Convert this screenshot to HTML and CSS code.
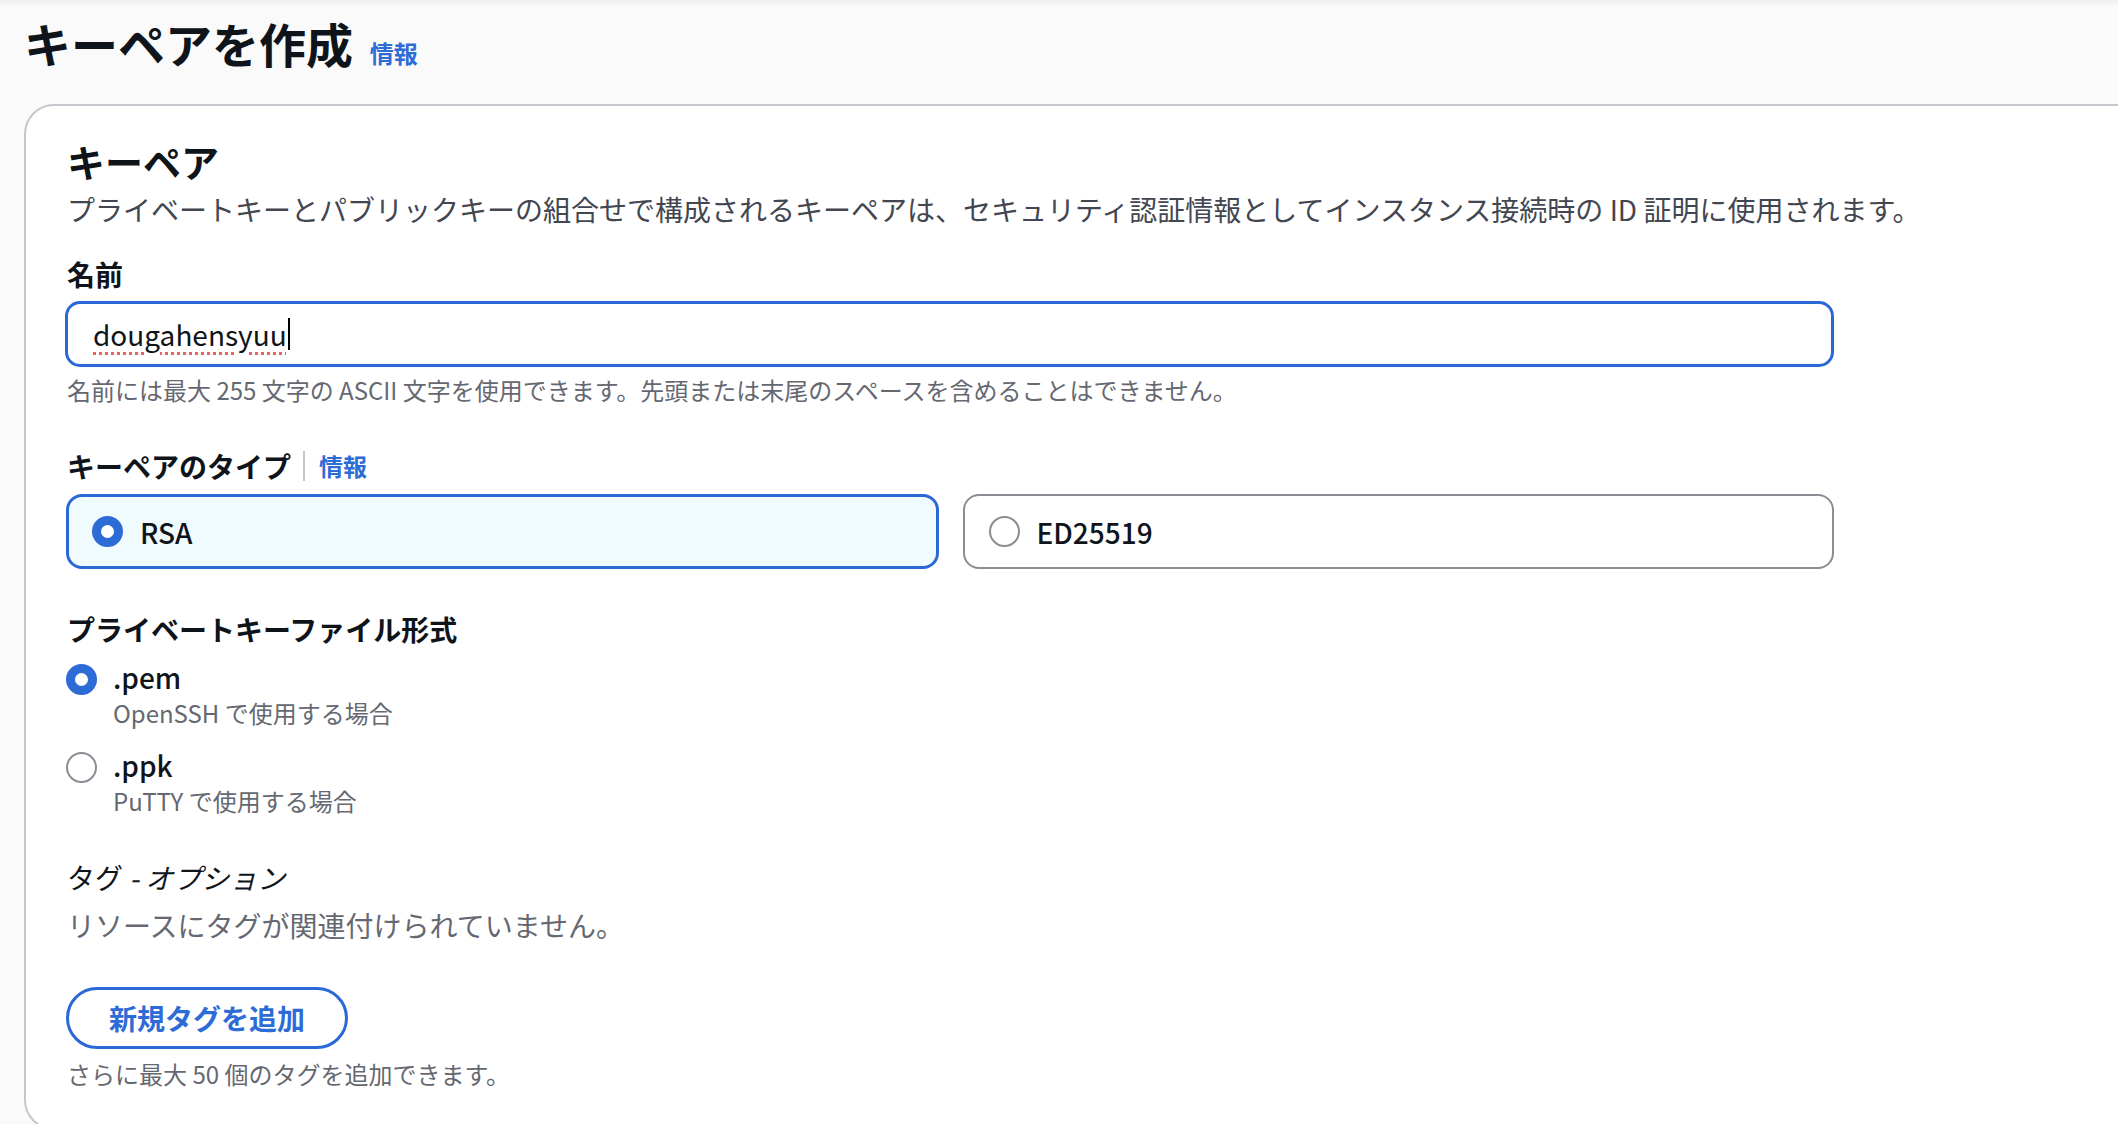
FILE: index.html
```html
<!DOCTYPE html>
<html lang="ja">

<head>
    <meta charset="UTF-8">
    <meta name="viewport" content="width=device-width, initial-scale=1.0">
    <title>キーペアを作成</title>
    <link rel="stylesheet" href="styles.css">
</head>

<body>
    <div class="page">
        <h1 class="page-title">キーペアを作成 <a class="info-link" href="#">情報</a></h1>

        <div class="card">
            <div class="card-header">
                <h2>キーペア</h2>
                <p class="desc">プライベートキーとパブリックキーの組合せで構成されるキーペアは、セキュリティ認証情報としてインスタンス接続時の ID 証明に使用されます。</p>
            </div>

            <!-- 名前 -->
            <div class="field field-name">
                <div class="label">名前</div>
                <div class="input focused">
                    <span class="typed">dougahensyuu</span><span class="caret"></span>
                </div>
                <div class="hint">名前には最大 255 文字の ASCII 文字を使用できます。先頭または末尾のスペースを含めることはできません。</div>
            </div>

            <!-- キーペアのタイプ -->
            <div class="field field-type">
                <div class="label">キーペアのタイプ <span class="sep"></span><a class="info-link small" href="#">情報</a></div>
                <div class="tiles">
                    <div class="tile selected">
                        <span class="radio checked"></span>
                        <span class="tile-text">RSA</span>
                    </div>
                    <div class="tile">
                        <span class="radio"></span>
                        <span class="tile-text">ED25519</span>
                    </div>
                </div>
            </div>

            <!-- ファイル形式 -->
            <div class="field field-format">
                <div class="label">プライベートキーファイル形式</div>
                <div class="option">
                    <span class="radio checked"></span>
                    <div>
                        <div class="option-label">.pem</div>
                        <div class="option-sub">OpenSSH で使用する場合</div>
                    </div>
                </div>
                <div class="option second">
                    <span class="radio"></span>
                    <div>
                        <div class="option-label">.ppk</div>
                        <div class="option-sub">PuTTY で使用する場合</div>
                    </div>
                </div>
            </div>

            <!-- タグ -->
            <div class="field field-tags">
                <div class="tags-title">タグ <i>- オプション</i></div>
                <div class="empty">リソースにタグが関連付けられていません。</div>
                <button class="btn-add">新規タグを追加</button>
                <div class="hint">さらに最大 50 個のタグを追加できます。</div>
            </div>
        </div>
    </div>
</body>

</html>
```

FILE: styles.css
```css
html,
body {
    margin: 0;
    padding: 0;
    height: 100%;
    overflow: hidden;
}

body {
    background: linear-gradient(#efefef, #fafafa 6px);
    font-family: "Noto Sans CJK JP", "Noto Sans", sans-serif;
    font-size: 28px;
    color: #0f141a;
}

.page {
    padding: 15px 0 0 24px;
}

.page-title {
    margin: 0;
    font-size: 47px;
    line-height: 56px;
    font-weight: 700;
}

.info-link {
    color: #2d6bd6;
    font-size: 24px;
    line-height: 1;
    font-weight: 700;
    text-decoration: none;
    margin-left: 6px;
}

.info-link.small {
    margin-left: 0;
}

/* Card */
.card {
    margin-top: 33px;
    margin-right: -60px;
    background: #fff;
    border: 2px solid #c6c6cd;
    border-radius: 30px;
    padding: 32px 0 38px 41px;
}

.card-header h2 {
    margin: 0;
    font-size: 38px;
    line-height: 46px;
    font-weight: 700;
}

.desc {
    margin: 7px 0 0;
    line-height: 36px;
    color: #424650;
}

.label {
    font-weight: 700;
    line-height: 36px;
    display: flex;
    align-items: center;
}

.hint {
    font-size: 24px;
    line-height: 32px;
    color: #656871;
}

.field-name {
    margin-top: 29px;
}

.input {
    box-sizing: border-box;
    width: 1769px;
    height: 66px;
    margin: 9px 0 7px -2px;
    border: 3px solid #2a68d6;
    border-radius: 15px;
    padding-left: 25px;
    display: flex;
    align-items: center;
    color: #0f141a;
}

.typed {
    text-decoration: underline dotted #e8645a;
    text-decoration-thickness: 3px;
    text-underline-offset: 6px;
}

.caret {
    display: inline-block;
    width: 2px;
    height: 32px;
    background: #000;
    margin-left: 1px;
}

.field-type {
    margin-top: 42px;
}

.sep {
    display: inline-block;
    width: 2px;
    height: 30px;
    background: #c6c6cd;
    margin: 0 14px 0 12px;
}

.tiles {
    display: flex;
    gap: 24px;
    margin: 10px 0 0 -1px;
    width: 1768px;
}

.tile {
    flex: 1;
    box-sizing: border-box;
    height: 75px;
    border: 2px solid #8c8c94;
    border-radius: 16px;
    padding-left: 24px;
    display: flex;
    align-items: center;
    gap: 17px;
    background: #fff;
}

.tile.selected {
    border: 3px solid #2a68d6;
    background: #f0fbff;
    padding-left: 23px;
}

.tile-text {
    font-weight: 500;
}

.radio {
    box-sizing: border-box;
    flex: none;
    width: 31px;
    height: 31px;
    border-radius: 50%;
    border: 2px solid #8c8c94;
    background: #fff;
}

.radio.checked {
    border: 9px solid #2d6bd6;
}

.field-format {
    margin-top: 42px;
}

.option {
    display: flex;
    gap: 16px;
    margin: 12px 0 0 -1px;
}

.option.second {
    margin-top: 18px;
}

.option .radio {
    margin-top: 5px;
}

.option-label {
    line-height: 36px;
    font-weight: 500;
}

.option-sub {
    font-size: 24px;
    line-height: 32px;
    color: #656871;
    margin-top: 2px;
}

.field-tags {
    margin-top: 42px;
}

.tags-title {
    line-height: 36px;
}

.tags-title i {
    font-style: italic;
}

.empty {
    margin-top: 12px;
    line-height: 36px;
    color: #656871;
}

.btn-add {
    display: block;
    box-sizing: border-box;
    height: 62px;
    margin: 44px 0 9px -1px;
    padding: 0 40px;
    border: 3px solid #2a68d6;
    border-radius: 31px;
    background: #fff;
    color: #2d6bd6;
    font-family: inherit;
    font-size: 28px;
    font-weight: 700;
}
```
